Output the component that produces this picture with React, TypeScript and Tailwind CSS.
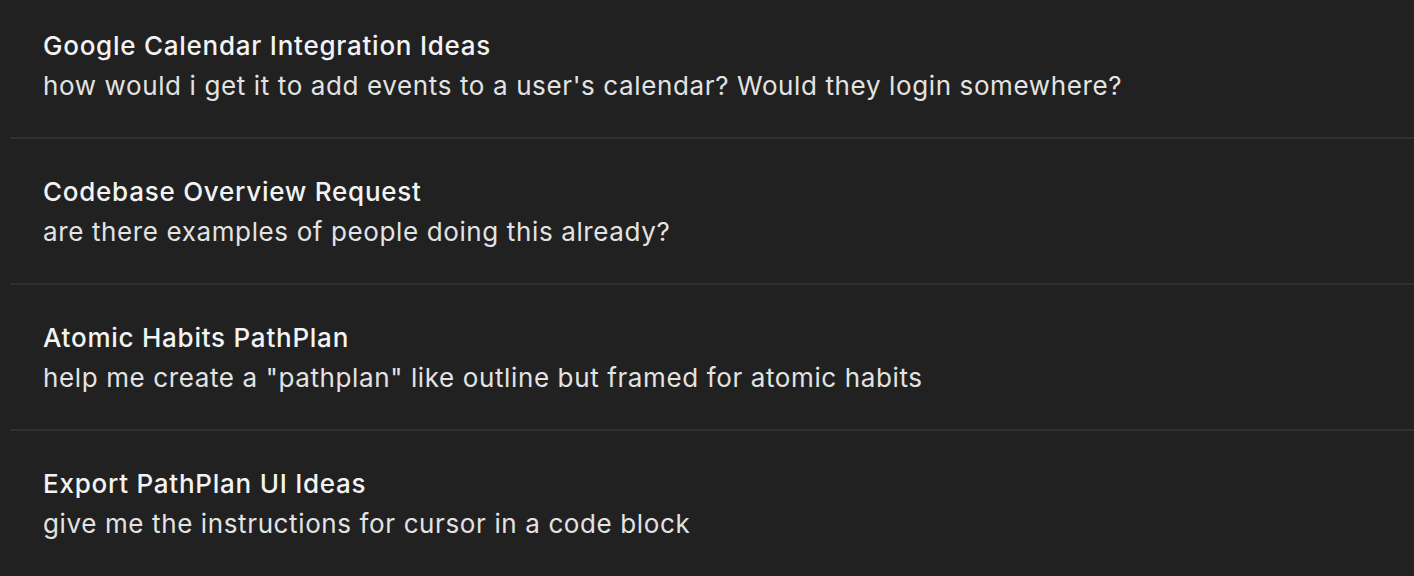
import React from 'react'

const chats = [
  {
    title: 'Google Calendar Integration Ideas',
    preview: "how would i get it to add events to a user's calendar? Would they login somewhere?",
  },
  { title: 'Codebase Overview Request', preview: 'are there examples of people doing this already?' },
  {
    title: 'Atomic Habits PathPlan',
    preview: 'help me create a "pathplan" like outline but framed for atomic habits',
  },
  { title: 'Export PathPlan UI Ideas', preview: 'give me the instructions for cursor in a code block' },
]

const App = () => {
  return (
    <div className="h-screen w-full overflow-hidden bg-[#212121] pl-[10px] font-['Inter',sans-serif]">
      {chats.map((c, i) => (
        <div
          key={i}
          className={`border-[#2f2f2f] pl-[33px] pb-[31px] ${i === 0 ? 'pt-[26px]' : 'pt-[33px]'} ${
            i < chats.length - 1 ? 'border-b-2' : ''
          }`}
        >
          <div className="text-[26px] leading-[40px] font-medium tracking-[0.75px] text-[#f3f3f3]">{c.title}</div>
          <div className="text-[26px] leading-[40px] tracking-[0.62px] text-[#e3e3e3]">{c.preview}</div>
        </div>
      ))}
    </div>
  )
}

export default App
